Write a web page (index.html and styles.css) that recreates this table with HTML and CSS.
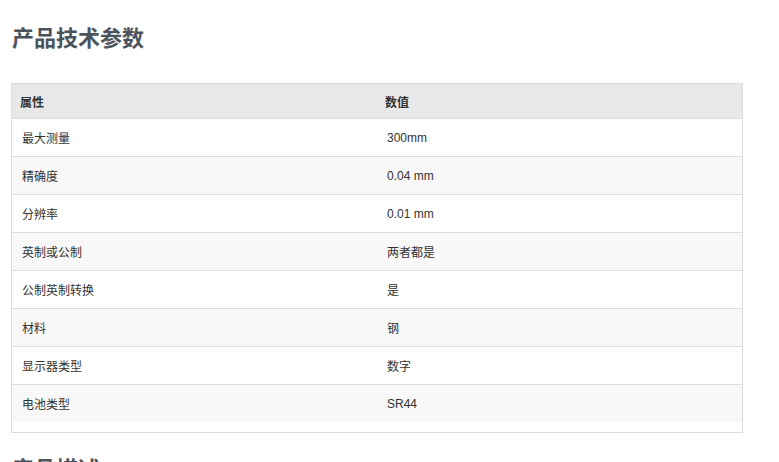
FILE: index.html
```html
<!DOCTYPE html>
<html lang="zh-CN">
<head>
<meta charset="utf-8">
<title>产品技术参数</title>
<link rel="stylesheet" href="styles.css">
</head>
<body>
<div class="page">
  <h2 class="title">产品技术参数</h2>
  <div class="spec-box">
    <table class="spec">
      <thead>
        <tr><th>属性</th><th>数值</th></tr>
      </thead>
      <tbody>
        <tr><td>最大测量</td><td>300mm</td></tr>
        <tr><td>精确度</td><td>0.04 mm</td></tr>
        <tr><td>分辨率</td><td>0.01 mm</td></tr>
        <tr><td>英制或公制</td><td>两者都是</td></tr>
        <tr><td>公制英制转换</td><td>是</td></tr>
        <tr><td>材料</td><td>钢</td></tr>
        <tr><td>显示器类型</td><td>数字</td></tr>
        <tr><td>电池类型</td><td>SR44</td></tr>
      </tbody>
    </table>
  </div>
  <h2 class="title next">产品描述</h2>
</div>
</body>
</html>
```
FILE: styles.css
```css
html, body {
  margin: 0;
  padding: 0;
  background: #fff;
}
body {
  font-family: "Liberation Sans", "Noto Sans CJK SC", Arial, sans-serif;
  color: #333;
  overflow: hidden;
}
.page {
  padding: 0 36px 0 11px;
}
.title {
  margin: 0;
  padding-top: 21px;
  padding-left: 1px;
  font-family: "Noto Sans CJK SC", sans-serif;
  font-size: 22px;
  line-height: 30px;
  font-weight: 700;
  color: #4b545c;
}
.title.next {
  padding-top: 19px;
}
.spec-box {
  margin-top: 32px;
  border: 1px solid #dcdcdc;
  padding-bottom: 10px;
}
.spec {
  width: 100%;
  border-collapse: collapse;
  table-layout: fixed;
  font-size: 12px;
}
.spec th, .spec td {
  text-align: left;
  vertical-align: middle;
  border-bottom: 1px solid #dddddd;
}
.spec th {
  height: 34px;
  padding: 0 8px;
  background: #e8e8e8;
  font-weight: 700;
  color: #333;
}
.spec td {
  height: 37px;
  padding: 0 10px;
  color: #333;
}
.spec tbody tr:nth-child(even) td {
  background: #f8f8f8;
}
.spec tbody tr:last-child td {
  border-bottom: none;
}
```
